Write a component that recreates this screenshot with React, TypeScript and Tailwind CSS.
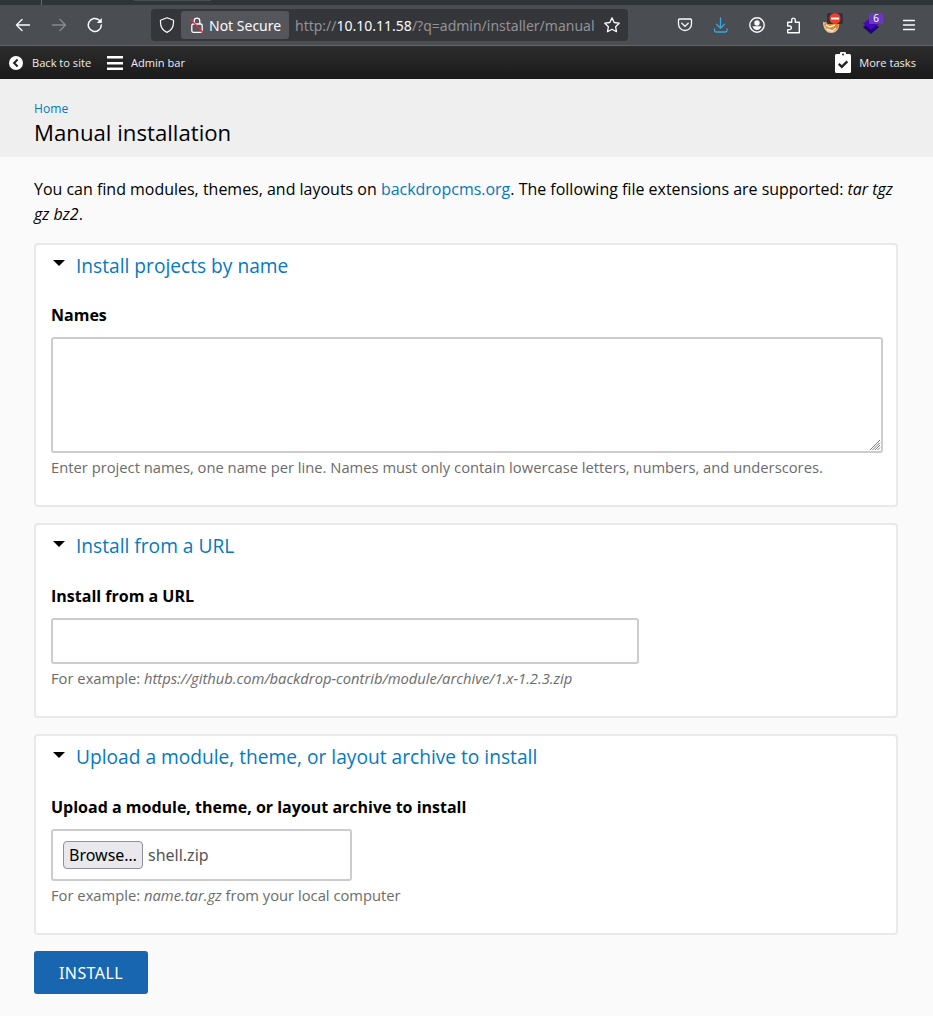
import React from "react";

interface PanelProps {
  title: string;
  height: string;
  marker: string;
  children: React.ReactNode;
}

function Panel({ title, height, marker, children }: PanelProps) {
  return (
    <section className={`mb-4 flex w-[864px] flex-col rounded-[4px] border-2 border-[#e9e9e9] bg-white px-[15px] ${height}`}>
      <h2 className="flex h-[42px] items-start text-[19.17px] leading-[42px] text-[#0678be]">
        <svg className={`mr-[11px] ml-[2px] ${marker}`} width="12" height="6" viewBox="0 0 12 6">
          <path d="M0 0h12L6 6z" fill="#000" />
        </svg>
        {title}
      </h2>
      {children}
    </section>
  );
}

function Label({ line = "leading-[34px]", children }: { line?: string; children: React.ReactNode }) {
  return <label className={`mt-3 mb-2 block h-[30px] text-base font-bold ${line}`}>{children}</label>;
}

function Hint({ children }: { children: React.ReactNode }) {
  return <p className="mt-[3px] h-[22px] text-[14.75px] leading-[22px] text-[#6b6b6b]">{children}</p>;
}

function Toolbar() {
  return (
    <header className="font-['Noto_Sans',sans-serif]">
      <div className="flex h-[5px] bg-[#2f3438]">
        <div className="h-full w-[42px] border-r border-[#6a6d70]" />
        <div className="ml-[92px] h-px w-[77px] bg-[#4a4d52]" />
      </div>
      <div className="flex h-[41px] items-center border-b border-[#626569] bg-[#4a4d52] text-[#fbfbfe]">
        <svg className="ml-[15px]" width="16" height="16" viewBox="0 0 16 16" fill="none" stroke="currentColor" strokeWidth="1.4" strokeLinecap="round" strokeLinejoin="round">
          <path d="M14.500 8H1.500M7 2.500 1.500 8 7 13.500" />
        </svg>
        <svg className="ml-5 text-[#88898c]" width="16" height="16" viewBox="0 0 16 16" fill="none" stroke="currentColor" strokeWidth="1.4" strokeLinecap="round" strokeLinejoin="round">
          <path d="M1.500 8h13M9 2.500 14.500 8 9 13.500" />
        </svg>
        <svg className="ml-5" width="16" height="16" viewBox="0 0 16 16" fill="none" stroke="currentColor" strokeWidth="1.5" strokeLinecap="round">
          <path d="M14.300 8A6.500 6.500 0 1 1 12.300 3.300" />
          <path d="M14.800 1v5h-5z" fill="currentColor" stroke="none" />
        </svg>
        <div className="ml-[48px] flex h-8 w-[477px] items-center rounded-[4px] bg-[#35363a]">
          <svg className="ml-2 shrink-0" width="16" height="16" viewBox="0 0 16 16" fill="none" stroke="currentColor" strokeWidth="1.200" strokeLinejoin="round">
            <path d="M8 .8 14.500 3.300C14.900 9 12.500 13.500 8 15.400 3.500 13.500 1.100 9 1.500 3.300Z" />
          </svg>
          <div className="ml-[6px] flex h-7 w-[108px] shrink-0 items-center rounded-[3px] bg-[#55565b]">
            <svg className="ml-2" width="16" height="16" viewBox="0 0 16 16" fill="none" stroke="currentColor" strokeWidth="1.300">
              <path d="M5.200 7V4a2.800 2.800 0 0 1 5.600 0v3" />
              <rect x="2.800" y="7" width="10.400" height="8.300" rx="1.500" />
              <path d="m1 2 13 13.500" stroke="#e22850" strokeWidth="1.300" />
            </svg>
            <span className="ml-1 pt-0.5 text-[14px] leading-[26px] whitespace-nowrap">Not Secure</span>
          </div>
          <span className="ml-[6px] w-[309px] shrink-0 pt-0.5 text-[14px] leading-[30px] whitespace-nowrap text-[#929396]">
            http://<span className="text-[#fbfbfe]">10.10.11.58</span>/?q=admin/installer/manual
          </span>
          <svg width="16" height="16" viewBox="0 0 16 16" className="shrink-0" fill="none" stroke="currentColor" strokeWidth="1.300" strokeLinejoin="round">
            <path d="m8 .9 2.200 4.600 5 .7-3.600 3.500.9 5L8 12.300l-4.500 2.400.9-5L.8 6.200l5-.7z" />
          </svg>
        </div>
        <svg className="ml-[49px]" width="16" height="16" viewBox="0 0 16 16" fill="none" stroke="currentColor" strokeWidth="1.300" strokeLinecap="round" strokeLinejoin="round">
          <path d="M2.500 2h11Q14.500 2 14.500 3v4a6.500 6.500 0 0 1-13 0V3q0-1 1-1ZM4.800 6.300 8 9.400l3.200-3.100" />
        </svg>
        <svg className="ml-[20px] text-[#3aa5e4]" width="16" height="16" viewBox="0 0 16 16" fill="none" stroke="currentColor" strokeWidth="1.300" strokeLinecap="round" strokeLinejoin="round">
          <path d="M7.500 1v10M3.500 7.200l4 4 4-4M1.500 12v1.500q0 1.500 1.500 1.500h9.500q1.500 0 1.500-1.500V12" />
        </svg>
        <svg className="ml-[20px]" width="16" height="16" viewBox="0 0 16 16" fill="none" stroke="currentColor" strokeWidth="1.400">
          <circle cx="8" cy="8" r="7.200" />
          <circle cx="8" cy="6" r="2.700" fill="currentColor" stroke="none" />
          <path d="M3.500 9.300h9C12 11.700 10 13 8 13s-4-1.300-4.500-3.700Z" fill="currentColor" stroke="none" />
        </svg>
        <svg className="ml-5" width="17" height="17" viewBox="0 0 17 17" fill="none" stroke="currentColor" strokeWidth="1.400" strokeLinejoin="round">
          <path d="M2.700 5.200h4V2.900a1.800 1.800 0 0 1 3.600 0v2.300h4v10.600H2.700v-3.200h1.900a1.800 1.800 0 0 0 0-3.600H2.700Z" />
        </svg>
        <svg className="mb-[4px] ml-[20px]" width="22" height="22" viewBox="0 0 22 22">
          <path d="M1 10c4 1 11 1 16 0 1 6-2 11-8 11C4 21 1 16 1 10Z" fill="#dfc4a7" />
          <path d="M2 12 8 9l9 1-1 6-4 3-7-2Z" fill="#e48325" />
          <path d="m4 13 4 2 5-2m-8 4 5 2 4-3" fill="none" stroke="#f9efdc" strokeWidth="1.400" />
          <rect x="5" y="1" width="16" height="11" rx="1.500" fill="#343135" />
          <circle cx="13" cy="6.500" r="5.500" fill="#f43d31" />
          <rect x="9" y="5.500" width="8" height="2" fill="#fff" />
        </svg>
        <svg className="mb-[4px] ml-[18px]" width="22" height="22" viewBox="0 0 22 22">
          <path d="m1 15 8-6 8 6-8 7z" fill="#1c0475" />
          <path d="m1 11.500 8-6 8 6-8 6z" fill="#4b04bd" />
          <rect x="7" y="1" width="14" height="11" rx="1.500" fill="#6a37c2" />
          <text x="14" y="10.200" textAnchor="middle" fontSize="10" fill="#fff">6</text>
        </svg>
        <svg className="ml-[18px]" width="14" height="12" viewBox="0 0 14 12" fill="none" stroke="currentColor" strokeWidth="1.300" strokeLinecap="round">
          <path d="M1.500 1.500h11M1.500 6h11M1.500 10.500h11" />
        </svg>
      </div>
    </header>
  );
}

function AdminBar() {
  return (
    <nav className="flex h-[33px] items-center bg-linear-to-b from-[#2d2d2d] to-[#1a1a1a] text-[11.1px] text-[#eee]">
      <svg className="ml-[9px]" width="14" height="14" viewBox="0 0 14 14">
        <circle cx="7" cy="7" r="7" fill="#fff" />
        <path d="M8.600 3.500 5.100 7l3.500 3.500" fill="none" stroke="#222" strokeWidth="2" />
      </svg>
      <span className="ml-[9px] w-[75px] pt-0.5">Back to site</span>
      <svg width="16" height="14" viewBox="0 0 16 14">
        <path d="M0 0h16v2.500H0zM0 6h16v2.500H0zM0 11.500h16V14H0z" fill="#fff" />
      </svg>
      <span className="ml-2 pt-0.5">Admin bar</span>
      <svg className="ml-auto" width="16" height="21" viewBox="0 0 16 21">
        <path d="M1.500 2H5a3 3 0 0 1 6 0h3.500Q16 2 16 3.500v16q0 1.500-1.500 1.500h-13Q0 21 0 19.500v-16Q0 2 1.500 2Z" fill="#fff" />
        <circle cx="8" cy="2.500" r="1" fill="#222" />
        <path d="m3.800 11.800 3 3 5.500-5.500" fill="none" stroke="#222" strokeWidth="2.400" />
      </svg>
      <span className="mr-[17px] ml-2 pt-0.5">More tasks</span>
    </nav>
  );
}

export default function App() {
  return (
    <div className="min-h-[1016px] w-[933px] bg-[#fafafa] font-['Open_Sans',sans-serif] text-black">
      <Toolbar />
      <AdminBar />
      <div className="h-[78px] bg-[#efefef] px-[34px] pt-5">
        <a className="block text-[12.1px] leading-[19px] text-[#0678be]">Home</a>
        <h1 className="text-[22.2px] leading-[29px]">Manual installation</h1>
      </div>
      <main className="px-[34px] pt-5">
        <p className="mb-4 h-[50px] text-[15.97px] leading-[25px] whitespace-nowrap">
          You can find modules, themes, and layouts on <a className="text-[#0678be]">backdropcms.org</a>. The following file extensions are supported: <em>tar tgz<br />gz bz2</em>.
        </p>
        <Panel title="Install projects by name" height="h-[264px]" marker="mt-[15px]">
          <Label line="leading-[32px]">Names</Label>
          <div className="flex h-[116px] w-[832px] shrink-0 items-end justify-end rounded-[3px] border-2 border-[#ccc] bg-white">
            <svg width="12" height="12" viewBox="0 0 12 12" stroke="#777" strokeWidth="0.9">
              <path d="m1 11 10-10M3.500 11 11 3.500M6 11l5-5M8.500 11 11 8.500" />
            </svg>
          </div>
          <Hint>Enter project names, one name per line. Names must only contain lowercase letters, numbers, and underscores.</Hint>
        </Panel>
        <Panel title="Install from a URL" height="h-[195px]" marker="mt-[16px]">
          <Label>Install from a URL</Label>
          <input className="mt-px block h-[46px] w-[588px] shrink-0 rounded-[3px] border-2 border-[#ccc] bg-white" />
          <Hint>For example: <em>https://github.com/backdrop-contrib/module/archive/1.x-1.2.3.zip</em></Hint>
        </Panel>
        <Panel title="Upload a module, theme, or layout archive to install" height="h-[201px]" marker="mt-[16px]">
          <Label>Upload a module, theme, or layout archive to install</Label>
          <div className="mt-px flex h-[52px] w-[301px] shrink-0 items-center rounded-[3px] border-2 border-[#ccc] bg-white px-[10px] font-['Noto_Sans',sans-serif]">
            <button className="h-7 w-20 rounded-[4px] border border-[#8f8f9d] bg-[#e9e9ed] text-base leading-6 whitespace-nowrap">Browse…</button>
            <span className="ml-[5px] text-base text-[#555]">shell.zip</span>
          </div>
          <Hint>For example: <em>name.tar.gz</em> from your local computer</Hint>
        </Panel>
        <button className="block h-[43px] w-[114px] rounded-[3px] bg-[#1966b0] font-['Noto_Sans',sans-serif] text-base tracking-[0.4px] text-white">INSTALL</button>
      </main>
    </div>
  );
}
